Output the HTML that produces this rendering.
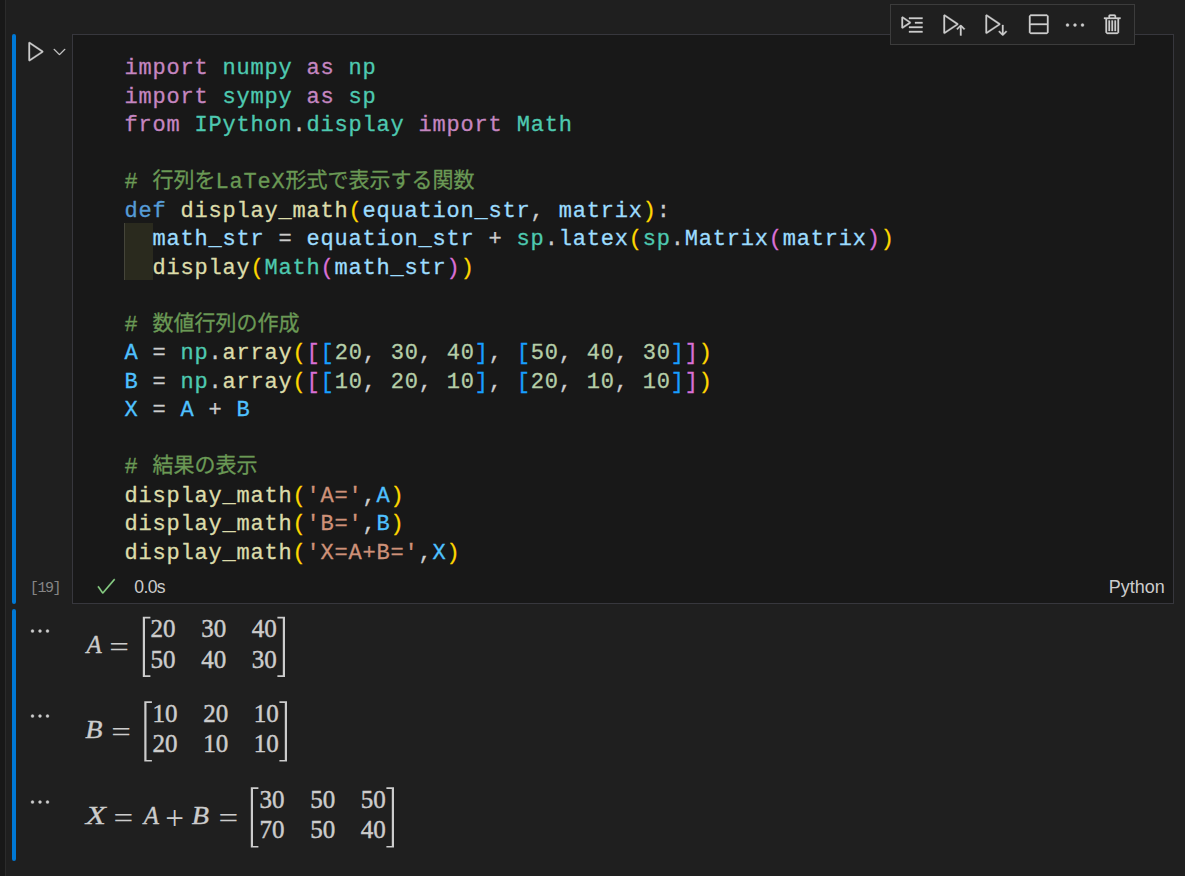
<!DOCTYPE html>
<html lang="ja">
<head>
<meta charset="utf-8">
<title>Notebook</title>
<style>
html,body{margin:0;padding:0;}
body{width:1185px;height:876px;overflow:hidden;background:#1f1f1f;position:relative;
  font-family:"Liberation Sans","Noto Sans CJK JP",sans-serif;color:#cccccc;}
.abs{position:absolute;}
#strip{left:0;top:0;width:5px;height:876px;background:#181818;border-right:1px solid #2b2b2b;}
.bar{left:12px;width:4px;background:#0078d4;border-radius:2px;}
#editor{left:72px;top:34px;width:1100px;height:568px;background:#181818;border:1px solid #37373d;}
#toolbar{left:890px;top:4px;width:243px;height:39px;background:#1f1f1f;border:1px solid #3c3c3c;}
.ln{position:absolute;left:124.5px;margin-top:3px;height:28.5px;line-height:28.5px;white-space:pre;
  font-family:"Liberation Mono","Noto Sans CJK JP",monospace;font-size:22px;letter-spacing:0.8px;color:#cccccc;-webkit-text-stroke:0.3px;}
.ln .j{font-family:"Liberation Mono","Noto Sans CJK JP",monospace;font-size:21px;letter-spacing:0;line-height:0;position:relative;top:-0.7px;}
.k{color:#c586c0}.m{color:#4ec9b0}.d{color:#569cd6}.f{color:#dcdcaa}.v{color:#9cdcfe}
.c{color:#4fc1ff}.n{color:#b5cea8}.s{color:#ce9178}.cm{color:#6a9955}
.b1{color:#ffd700}.b2{color:#da70d6}.b3{color:#179fff}
#indent{left:124px;top:223px;width:29px;height:57px;background:#2a2a1e;}
#indent:before{content:"";position:absolute;left:0;top:0;width:1px;height:100%;background:#45453a;}
.ui{font-family:"Liberation Sans",sans-serif;white-space:pre;}
</style>
</head>
<body>
<div id="strip" class="abs"></div>
<div class="abs bar" style="top:34px;height:570px"></div>
<div class="abs bar" style="top:609px;height:252px"></div>

<div id="editor" class="abs"></div>
<div id="indent" class="abs"></div>

<div id="code">
<div class="ln" style="top:52px"><span class="k">import</span> <span class="m">numpy</span> <span class="k">as</span> <span class="m">np</span></div>
<div class="ln" style="top:80.5px"><span class="k">import</span> <span class="m">sympy</span> <span class="k">as</span> <span class="m">sp</span></div>
<div class="ln" style="top:109px"><span class="k">from</span> <span class="m">IPython</span>.<span class="m">display</span> <span class="k">import</span> <span class="m">Math</span></div>
<div class="ln cm" style="top:166px"># <span class="j">行列を</span>LaTeX<span class="j">形式で表示する関数</span></div>
<div class="ln" style="top:194.5px"><span class="d">def</span> <span class="f">display_math</span><span class="b1">(</span><span class="v">equation_str</span>, <span class="v">matrix</span><span class="b1">)</span>:</div>
<div class="ln" style="top:223px">  <span class="v">math_str</span> = <span class="v">equation_str</span> + <span class="m">sp</span>.<span class="v">latex</span><span class="b1">(</span><span class="m">sp</span>.<span class="v">Matrix</span><span class="b2">(</span><span class="v">matrix</span><span class="b2">)</span><span class="b1">)</span></div>
<div class="ln" style="top:251.5px">  <span class="f">display</span><span class="b1">(</span><span class="m">Math</span><span class="b2">(</span><span class="v">math_str</span><span class="b2">)</span><span class="b1">)</span></div>
<div class="ln cm" style="top:308.5px"># <span class="j">数値行列の作成</span></div>
<div class="ln" style="top:337px"><span class="c">A</span> = <span class="m">np</span>.<span class="f">array</span><span class="b1">(</span><span class="b2">[</span><span class="b3">[</span><span class="n">20</span>, <span class="n">30</span>, <span class="n">40</span><span class="b3">]</span>, <span class="b3">[</span><span class="n">50</span>, <span class="n">40</span>, <span class="n">30</span><span class="b3">]</span><span class="b2">]</span><span class="b1">)</span></div>
<div class="ln" style="top:365.5px"><span class="c">B</span> = <span class="m">np</span>.<span class="f">array</span><span class="b1">(</span><span class="b2">[</span><span class="b3">[</span><span class="n">10</span>, <span class="n">20</span>, <span class="n">10</span><span class="b3">]</span>, <span class="b3">[</span><span class="n">20</span>, <span class="n">10</span>, <span class="n">10</span><span class="b3">]</span><span class="b2">]</span><span class="b1">)</span></div>
<div class="ln" style="top:394px"><span class="c">X</span> = <span class="c">A</span> + <span class="c">B</span></div>
<div class="ln cm" style="top:451px"># <span class="j">結果の表示</span></div>
<div class="ln" style="top:479.5px"><span class="f">display_math</span><span class="b1">(</span><span class="s">'A='</span>,<span class="c">A</span><span class="b1">)</span></div>
<div class="ln" style="top:508px"><span class="f">display_math</span><span class="b1">(</span><span class="s">'B='</span>,<span class="c">B</span><span class="b1">)</span></div>
<div class="ln" style="top:536.5px"><span class="f">display_math</span><span class="b1">(</span><span class="s">'X=A+B='</span>,<span class="c">X</span><span class="b1">)</span></div>
</div>


<!-- cell toolbar -->
<div id="toolbar" class="abs">
<svg class="abs" style="left:9.4px;top:7.7px" width="24" height="24" viewBox="0 0 16 16" fill="#cccccc" stroke="#cccccc" stroke-width="0.22"><path d="M1 2.8l.78-.42 5.37 3.58v.84L1.78 10.38 1 9.96V2.8zm1 .93v5.3L5.97 6.38 2 3.73z"/><path d="M6 3h9v1H6zM10 6h5v1h-5zM6 9h9v1H6zM6 12h9v1H6z"/></svg>
<svg class="abs" style="left:50.7px;top:7.7px" width="24" height="24" viewBox="0 0 16 16" fill="#cccccc" stroke="#cccccc" stroke-width="0.22"><path d="M1.77 1.01L1 1.42v12l.78.42 9-6v-.83l-9-6zM2 12.49V2.36l7.6 5.07L2 12.49zM12.15 8h.71l2.5 2.5-.71.71L13 9.56V15h-1V9.55l-1.65 1.65-.7-.7 2.5-2.5z"/></svg>
<svg class="abs" style="left:92.8px;top:7.7px" width="24" height="24" viewBox="0 0 16 16" fill="#cccccc" stroke="#cccccc" stroke-width="0.22"><path d="M1.8 1.01l-.78.41v12l.78.42 9-6v-.83l-9-6zm.22 11.48V2.36l7.6 5.07-7.6 5.06zM12.85 15h-.71l-2.5-2.5.71-.71L12 13.44V8h1v5.45l1.65-1.65.7.7-2.5 2.5z"/></svg>
<svg class="abs" style="left:134.6px;top:7.7px" width="24" height="24" viewBox="0 0 16 16" fill="#cccccc" stroke="#cccccc" stroke-width="0.22"><path d="M14 1H3L2 2v11l1 1h11l1-1V2l-1-1zm0 12H3V8h11v5zm0-6H3V2h11v5z"/></svg>
<svg class="abs" style="left:172px;top:7.7px" width="24" height="24" viewBox="0 0 16 16" fill="#cccccc" stroke="#cccccc" stroke-width="0.22"><path d="M4 8a1 1 0 1 1-2 0 1 1 0 0 1 2 0zm5 0a1 1 0 1 1-2 0 1 1 0 0 1 2 0zm5 0a1 1 0 1 1-2 0 1 1 0 0 1 2 0z"/></svg>
<svg class="abs" style="left:209.8px;top:7.7px" width="24" height="24" viewBox="0 0 16 16" fill="#cccccc" stroke="#cccccc" stroke-width="0.22"><path fill-rule="evenodd" d="M10 3h3v1h-1v9l-1 1H4l-1-1V4H2V3h3V2a1 1 0 0 1 1-1h3a1 1 0 0 1 1 1v1zM9 2H6v1h3V2zM4 13h7V4H4v9zm2-8H5v7h1V5zm1 0h1v7H7V5zm2 0h1v7H9V5z"/></svg>
</div>

<!-- run button + chevron -->
<svg class="abs" style="left:23.7px;top:39px" width="24" height="24" viewBox="0 0 16 16" fill="#cccccc" stroke="#cccccc" stroke-width="0.22"><path d="M3.78 2L3 2.41v12l.78.42 9-6V8l-9-6zM4 13.48V3.35l7.6 5.07L4 13.48z"/></svg>
<svg class="abs" style="left:49.9px;top:41.9px" width="19" height="19" viewBox="0 0 16 16" fill="#cccccc" stroke="#cccccc" stroke-width="0.22"><path d="M7.976 10.072l4.357-4.357.62.618L8.284 11h-.618L3 6.333l.619-.618 4.357 4.357z"/></svg>

<!-- status row -->
<div class="abs" id="exec" style="left:29.8px;top:580px;font-family:'Liberation Mono',monospace;font-size:15px;letter-spacing:-1.4px;color:#858585;line-height:18px;white-space:pre">[19]</div>
<svg class="abs" style="left:95.1px;top:574.6px" width="22.3" height="22.3" viewBox="0 0 16 16" fill="#89d185" stroke="#89d185" stroke-width="0.2"><path d="M14.431 3.323l-8.47 10-.79-.036-3.35-4.77.818-.574 2.978 4.24 8.051-9.506.764.646z"/></svg>
<div class="abs ui" id="dur" style="left:134.3px;top:576.4px;font-size:17.6px;letter-spacing:-0.65px;line-height:22px">0.0s</div>
<div class="abs ui" id="lang" style="left:1108.7px;top:576px;font-size:18px;line-height:22px">Python</div>

<!-- output ellipses -->
<svg class="abs" style="left:28.2px;top:619px" width="24" height="24" viewBox="0 0 16 16" fill="#cccccc" stroke="#cccccc" stroke-width="0.22"><path d="M4 8a1 1 0 1 1-2 0 1 1 0 0 1 2 0zm5 0a1 1 0 1 1-2 0 1 1 0 0 1 2 0zm5 0a1 1 0 1 1-2 0 1 1 0 0 1 2 0z"/></svg>
<svg class="abs" style="left:28.2px;top:704.4px" width="24" height="24" viewBox="0 0 16 16" fill="#cccccc" stroke="#cccccc" stroke-width="0.22"><path d="M4 8a1 1 0 1 1-2 0 1 1 0 0 1 2 0zm5 0a1 1 0 1 1-2 0 1 1 0 0 1 2 0zm5 0a1 1 0 1 1-2 0 1 1 0 0 1 2 0z"/></svg>
<svg class="abs" style="left:28.2px;top:789.5px" width="24" height="24" viewBox="0 0 16 16" fill="#cccccc" stroke="#cccccc" stroke-width="0.22"><path d="M4 8a1 1 0 1 1-2 0 1 1 0 0 1 2 0zm5 0a1 1 0 1 1-2 0 1 1 0 0 1 2 0zm5 0a1 1 0 1 1-2 0 1 1 0 0 1 2 0z"/></svg>

<!--MATH-->
<svg class="abs" id="math" style="left:0;top:0" width="1185" height="876" fill="#cccccc">
<text transform="translate(86.50,653.20) scale(0.950,1)" font-family="Liberation Serif, serif" font-style="italic" font-size="26.2" stroke="#cccccc" stroke-width="0.35">A</text>
<text transform="translate(109.30,657.00) scale(1.400,1.170)" font-family="Liberation Serif, serif" font-size="25" stroke="#cccccc" stroke-width="0">=</text>
<path d="M142.80 616.70h7.6v1.7h-5.40V675.30h5.40v1.7h-7.6z"/>
<text transform="translate(150.60,637.30) scale(1.000,1.000)" font-family="Liberation Serif, serif" font-size="25" stroke="#cccccc" stroke-width="0.45">20</text>
<text transform="translate(201.20,637.30) scale(1.000,1.000)" font-family="Liberation Serif, serif" font-size="25" stroke="#cccccc" stroke-width="0.45">30</text>
<text transform="translate(251.80,637.30) scale(1.000,1.000)" font-family="Liberation Serif, serif" font-size="25" stroke="#cccccc" stroke-width="0.45">40</text>
<text transform="translate(150.60,667.80) scale(1.000,1.000)" font-family="Liberation Serif, serif" font-size="25" stroke="#cccccc" stroke-width="0.45">50</text>
<text transform="translate(201.20,667.80) scale(1.000,1.000)" font-family="Liberation Serif, serif" font-size="25" stroke="#cccccc" stroke-width="0.45">40</text>
<text transform="translate(251.80,667.80) scale(1.000,1.000)" font-family="Liberation Serif, serif" font-size="25" stroke="#cccccc" stroke-width="0.45">30</text>
<path d="M285.00 616.70h-7.6v1.7h5.40V675.30h-5.40v1.7h7.6z"/>
<text transform="translate(85.20,737.80) scale(1.077,1)" font-family="Liberation Serif, serif" font-style="italic" font-size="26.2" stroke="#cccccc" stroke-width="0.35">B</text>
<text transform="translate(111.30,741.60) scale(1.400,1.170)" font-family="Liberation Serif, serif" font-size="25" stroke="#cccccc" stroke-width="0">=</text>
<path d="M144.30 701.30h7.6v1.7h-5.40V759.90h5.40v1.7h-7.6z"/>
<text transform="translate(152.60,721.90) scale(1.000,1.000)" font-family="Liberation Serif, serif" font-size="25" stroke="#cccccc" stroke-width="0.45">10</text>
<text transform="translate(203.20,721.90) scale(1.000,1.000)" font-family="Liberation Serif, serif" font-size="25" stroke="#cccccc" stroke-width="0.45">20</text>
<text transform="translate(253.80,721.90) scale(1.000,1.000)" font-family="Liberation Serif, serif" font-size="25" stroke="#cccccc" stroke-width="0.45">10</text>
<text transform="translate(152.60,752.40) scale(1.000,1.000)" font-family="Liberation Serif, serif" font-size="25" stroke="#cccccc" stroke-width="0.45">20</text>
<text transform="translate(203.20,752.40) scale(1.000,1.000)" font-family="Liberation Serif, serif" font-size="25" stroke="#cccccc" stroke-width="0.45">10</text>
<text transform="translate(253.80,752.40) scale(1.000,1.000)" font-family="Liberation Serif, serif" font-size="25" stroke="#cccccc" stroke-width="0.45">10</text>
<path d="M287.00 701.30h-7.6v1.7h5.40V759.90h-5.40v1.7h7.6z"/>
<text transform="translate(85.80,824.00) scale(1.255,1)" font-family="Liberation Serif, serif" font-style="italic" font-size="26.2" stroke="#cccccc" stroke-width="0.35">X</text>
<text transform="translate(113.40,827.80) scale(1.400,1.170)" font-family="Liberation Serif, serif" font-size="25" stroke="#cccccc" stroke-width="0">=</text>
<text transform="translate(143.70,824.00) scale(0.950,1)" font-family="Liberation Serif, serif" font-style="italic" font-size="26.2" stroke="#cccccc" stroke-width="0.35">A</text>
<text transform="translate(165.30,829.40) scale(1.330,1.380)" font-family="Liberation Serif, serif" font-size="25" stroke="#cccccc" stroke-width="0">+</text>
<text transform="translate(191.70,824.00) scale(1.077,1)" font-family="Liberation Serif, serif" font-style="italic" font-size="26.2" stroke="#cccccc" stroke-width="0.35">B</text>
<text transform="translate(218.40,827.80) scale(1.400,1.170)" font-family="Liberation Serif, serif" font-size="25" stroke="#cccccc" stroke-width="0">=</text>
<path d="M250.80 787.30h7.6v1.7h-5.40V845.90h5.40v1.7h-7.6z"/>
<text transform="translate(259.60,807.90) scale(1.000,1.000)" font-family="Liberation Serif, serif" font-size="25" stroke="#cccccc" stroke-width="0.45">30</text>
<text transform="translate(310.20,807.90) scale(1.000,1.000)" font-family="Liberation Serif, serif" font-size="25" stroke="#cccccc" stroke-width="0.45">50</text>
<text transform="translate(360.80,807.90) scale(1.000,1.000)" font-family="Liberation Serif, serif" font-size="25" stroke="#cccccc" stroke-width="0.45">50</text>
<text transform="translate(259.60,838.40) scale(1.000,1.000)" font-family="Liberation Serif, serif" font-size="25" stroke="#cccccc" stroke-width="0.45">70</text>
<text transform="translate(310.20,838.40) scale(1.000,1.000)" font-family="Liberation Serif, serif" font-size="25" stroke="#cccccc" stroke-width="0.45">50</text>
<text transform="translate(360.80,838.40) scale(1.000,1.000)" font-family="Liberation Serif, serif" font-size="25" stroke="#cccccc" stroke-width="0.45">40</text>
<path d="M394.00 787.30h-7.6v1.7h5.40V845.90h-5.40v1.7h7.6z"/>
</svg>
<!--/MATH-->
</body>
</html>
